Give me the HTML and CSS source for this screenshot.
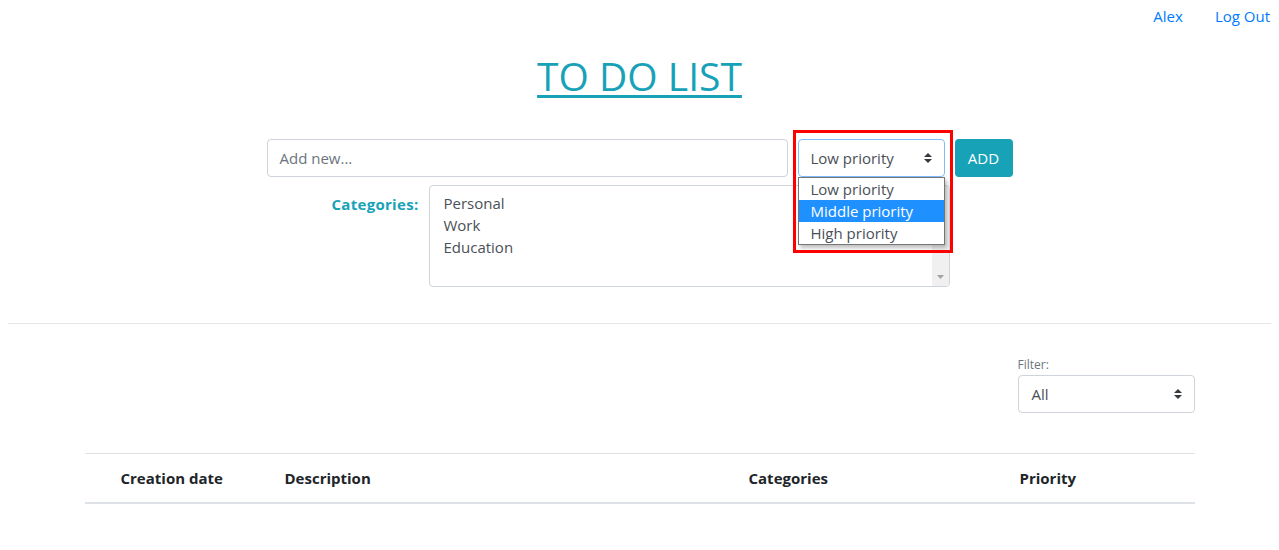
FILE: index.html
```html
<!DOCTYPE html>
<html lang="en">
<head>
<meta charset="utf-8">
<title>To Do List</title>
<link rel="stylesheet" href="styles.css">
</head>
<body>
<div class="page">
  <nav class="topnav">
    <a class="nav-link" href="#">Alex</a>
    <a class="nav-link last" href="#">Log Out</a>
  </nav>

  <h1 class="title"><a href="#">TO DO LIST</a></h1>

  <form class="add-form">
    <div class="form-row">
      <div class="text-input placeholder">Add new...</div>
      <div class="priority-wrap">
        <div class="select focused">
          <span>Low priority</span>
          <svg class="sel-arrow" width="8" height="10" viewBox="0 0 4 5"><path d="M2 0L0 2h4zm0 5L0 3h4z" fill="#343a40"/></svg>
        </div>
        <ul class="dropdown">
          <li>Low priority</li>
          <li class="active">Middle priority</li>
          <li>High priority</li>
        </ul>
        <div class="annotation"></div>
      </div>
      <button class="btn-add" type="button">ADD</button>
    </div>
    <div class="form-row cat-row">
      <label class="cat-label">Categories:</label>
      <div class="multi">
        <ul class="multi-list">
          <li>Personal</li>
          <li>Work</li>
          <li>Education</li>
        </ul>
        <div class="scroll-track">
          <svg width="7" height="4" viewBox="0 0 7 4"><path d="M0 0h7L3.5 4z" fill="#a3a3a3"/></svg>
          <svg width="7" height="4" viewBox="0 0 7 4"><path d="M0 0h7L3.5 4z" fill="#a3a3a3"/></svg>
        </div>
      </div>
    </div>
  </form>

  <hr class="divider">

  <div class="container">
    <div class="filter-bar">
      <div class="filter">
        <label class="filter-label">Filter:</label>
        <div class="select filter-select">
          <span>All</span>
          <svg class="sel-arrow" width="8" height="10" viewBox="0 0 4 5"><path d="M2 0L0 2h4zm0 5L0 3h4z" fill="#343a40"/></svg>
        </div>
      </div>
    </div>

    <table class="todo-table">
      <thead>
        <tr>
          <th class="c-date">Creation date</th>
          <th class="c-desc">Description</th>
          <th class="c-cat">Categories</th>
          <th class="c-pri">Priority</th>
        </tr>
      </thead>
    </table>
  </div>
</div>
</body>
</html>
```

FILE: styles.css
```css
* { box-sizing: border-box; }

body {
  margin: 0;
  font-family: "Open Sans", "Noto Sans", sans-serif;
  font-size: 15px;
  line-height: 24px;
  color: #212529;
  background: #fff;
}

.page { padding: 0 8px; }

.topnav {
  display: flex;
  justify-content: flex-end;
  padding-top: 4px;
  height: 28px;
}
.nav-link {
  color: #007bff;
  text-decoration: none;
  padding: 0 16px;
}
.nav-link.last { padding-right: 1px; }

.title {
  margin: 24px 0 0;
  text-align: center;
  font-size: 39px;
  line-height: 48px;
  font-weight: 500;
}
.title a {
  color: #17a2b8;
  text-decoration: underline;
  text-decoration-thickness: 3px;
  text-underline-offset: 4px;
}

.add-form { margin-top: 39px; }

.form-row {
  display: flex;
  justify-content: center;
  gap: 10px;
}

.text-input {
  width: 521px;
  height: 38px;
  border: 1px solid #ced4da;
  border-radius: 4px;
  padding: 6px 12px;
  color: #495057;
}
.placeholder { color: #6c757d; }

.priority-wrap { position: relative; }

.select {
  position: relative;
  height: 38px;
  border: 1px solid #ced4da;
  border-radius: 4px;
  padding: 6px 28px 6px 12px;
  color: #495057;
  background: #fff;
}
.select.focused {
  width: 147px;
  border-color: #80bdff;
}
.sel-arrow {
  position: absolute;
  right: 12px;
  top: 13px;
}

.dropdown {
  position: absolute;
  left: 0;
  top: 38px;
  width: 147px;
  margin: 0;
  padding: 0;
  list-style: none;
  background: #fff;
  border: 1px solid #767676;
  box-shadow: 2px 3px 4px rgba(0, 0, 0, 0.25);
  z-index: 2;
}
.dropdown li {
  height: 22px;
  line-height: 22px;
  padding-left: 12px;
  color: #495057;
}
.dropdown li.active {
  background: #1e90ff;
  color: #fff;
}

.annotation {
  position: absolute;
  left: -5px;
  top: -9px;
  width: 160px;
  height: 123px;
  border: 3px solid #ff0000;
  z-index: 3;
  pointer-events: none;
}

.btn-add {
  width: 58px;
  height: 38px;
  border: 0;
  border-radius: 4px;
  background: #17a2b8;
  color: #fff;
  font-family: inherit;
  font-size: 15px;
  line-height: 24px;
  padding: 0;
}

.cat-row { margin-top: 8px; }

.cat-label {
  width: 89px;
  text-align: right;
  color: #17a2b8;
  font-weight: 700;
  letter-spacing: 0.3px;
  padding-top: 7px;
}

.multi {
  position: relative;
  width: 521px;
  height: 102px;
  border: 1px solid #ced4da;
  border-radius: 4px;
  display: flex;
  overflow: hidden;
}
.multi-list {
  flex: 1;
  margin: 0;
  padding: 6px 14px;
  list-style: none;
  color: #495057;
  line-height: 22px;
}
.scroll-track {
  width: 17px;
  background: #f0f0f0;
  display: flex;
  flex-direction: column;
  justify-content: space-between;
  align-items: center;
  padding: 6px 0 7px;
}
.scroll-track svg:first-child { transform: rotate(180deg); }

.divider {
  margin: 36px 0 0;
  border: 0;
  border-top: 1px solid #e6e6e6;
}

.container {
  width: 1110px;
  margin: 0 auto;
}

.filter-bar {
  display: flex;
  justify-content: flex-end;
  margin-top: 33px;
}
.filter { width: 177px; }
.filter-label {
  display: block;
  font-size: 12px;
  line-height: 16px;
  color: #6c757d;
  margin-bottom: 2px;
}
.filter-select { width: 177px; padding-left: 13px; }

.todo-table {
  width: 100%;
  margin-top: 40px;
  border-collapse: collapse;
  table-layout: fixed;
}
.todo-table th {
  text-align: left;
  font-weight: 700;
  padding: 12px;
  border-top: 1px solid #dee2e6;
  border-bottom: 2px solid #dee2e6;
  line-height: 24px;
}
.c-date { width: 188px; padding-left: 36px !important; }
.c-desc { width: 464px; }
.c-cat { width: 271px; }
.c-pri { width: 187px; }
```
